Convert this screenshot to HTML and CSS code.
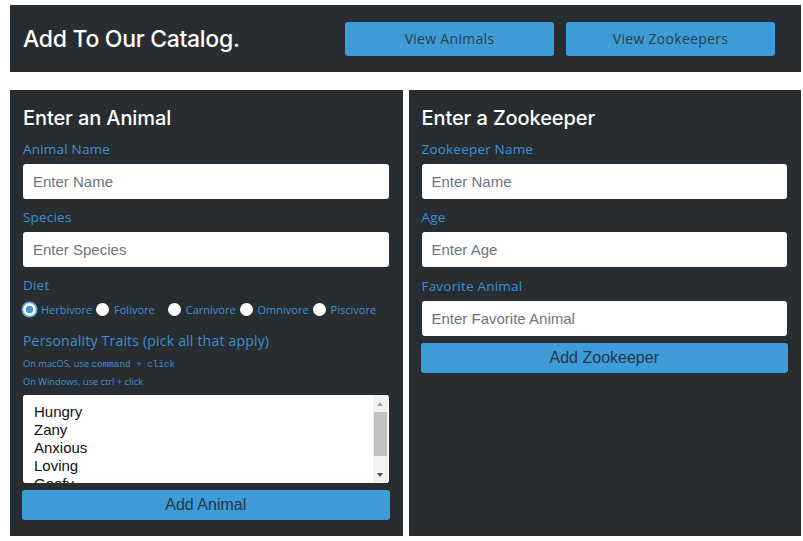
FILE: index.html
```html
<!DOCTYPE html>
<html lang="en">
<head>
<meta charset="utf-8">
<title>Zoo Catalog</title>
<link rel="stylesheet" href="styles.css">
</head>
<body>
<div class="page">
  <header class="topbar">
    <h1 class="title">Add To Our Catalog.</h1>
    <nav class="nav">
      <a class="nav-btn" href="#">View Animals</a>
      <a class="nav-btn" href="#">View Zookeepers</a>
    </nav>
  </header>

  <main class="panels">
    <form class="panel">
      <h2 class="panel-title">Enter an Animal</h2>
      <div class="field">
        <label class="label" for="name">Animal Name</label>
        <input class="input" id="name" type="text" placeholder="Enter Name">
      </div>
      <div class="field">
        <label class="label" for="species">Species</label>
        <input class="input" id="species" type="text" placeholder="Enter Species">
      </div>
      <div class="field field-diet">
        <div class="label">Diet</div>
        <div class="radios">
          <input class="radio" type="radio" name="diet" id="herbivore" checked><label class="radio-label" for="herbivore">Herbivore</label>
          <input class="radio" type="radio" name="diet" id="folivore"><label class="radio-label radio-label-wide" for="folivore">Folivore</label>
          <input class="radio" type="radio" name="diet" id="carnivore"><label class="radio-label" for="carnivore">Carnivore</label>
          <input class="radio" type="radio" name="diet" id="omnivore"><label class="radio-label" for="omnivore">Omnivore</label>
          <input class="radio" type="radio" name="diet" id="piscivore"><label class="radio-label" for="piscivore">Piscivore</label>
        </div>
      </div>
      <label class="label label-traits" for="traits">Personality Traits (pick all that apply)</label>
      <p class="hint">On macOS, use <span class="mono">command + click</span></p>
      <p class="hint">On Windows, use ctrl + click</p>
      <div class="listbox">
        <select class="traits" id="traits" multiple>
          <option>Hungry</option>
          <option>Zany</option>
          <option>Anxious</option>
          <option>Loving</option>
          <option>Goofy</option>
          <option>Sleepy</option>
        </select>
        <div class="scrollbar" aria-hidden="true">
          <span class="sb-btn"><span class="arrow-up"></span></span>
          <span class="sb-track"><span class="sb-thumb"></span></span>
          <span class="sb-btn"><span class="arrow-down"></span></span>
        </div>
      </div>
      <button class="submit" type="button">Add Animal</button>
    </form>

    <form class="panel">
      <h2 class="panel-title">Enter a Zookeeper</h2>
      <div class="field">
        <label class="label" for="zname">Zookeeper Name</label>
        <input class="input" id="zname" type="text" placeholder="Enter Name">
      </div>
      <div class="field">
        <label class="label" for="age">Age</label>
        <input class="input" id="age" type="text" placeholder="Enter Age">
      </div>
      <div class="field field-last">
        <label class="label" for="fav">Favorite Animal</label>
        <input class="input" id="fav" type="text" placeholder="Enter Favorite Animal">
      </div>
      <button class="submit" type="button">Add Zookeeper</button>
    </form>
  </main>
</div>
</body>
</html>
```

FILE: styles.css
```css
* { box-sizing: border-box; }

html, body {
  margin: 0;
  padding: 0;
  background: #ffffff;
}

.page {
  padding: 5px 2px 0 10px;
}

.topbar {
  display: flex;
  align-items: center;
  height: 67px;
  padding: 0 26px 0 13px;
  background: #282d31;
}

.title {
  flex: 1;
  margin: 0;
  font-family: Inter, "Open Sans", sans-serif;
  font-weight: 500;
  font-size: 23px;
  color: #ffffff;
  letter-spacing: -0.3px;
}

.nav {
  display: flex;
  gap: 12px;
}

.nav-btn {
  display: flex;
  align-items: center;
  justify-content: center;
  width: 209px;
  height: 34px;
  border-radius: 3px;
  background: #3d9bd8;
  color: #2c3f4e;
  font-family: "Open Sans", sans-serif;
  font-size: 14px;
  text-decoration: none;
  letter-spacing: 0.3px;
}

.panels {
  display: flex;
  gap: 6px;
  margin-top: 18px;
}

.panel {
  flex: 1;
  display: flex;
  flex-direction: column;
  height: 446px;
  margin: 0;
  padding: 16px 14px 0 13px;
  background: #282d31;
}

.panel-title {
  margin: 0 0 10px;
  font-family: Inter, "Open Sans", sans-serif;
  font-weight: 500;
  font-size: 20px;
  line-height: 24px;
  color: #ffffff;
  letter-spacing: -0.1px;
}

.field {
  display: flex;
  flex-direction: column;
  margin-bottom: 9px;
}

.label {
  display: block;
  margin-bottom: 6px;
  font-family: "Open Sans", sans-serif;
  font-weight: 500;
  font-size: 13.5px;
  line-height: 18px;
  color: #3f8ed0;
  letter-spacing: 0.2px;
}

.input {
  height: 35px;
  padding: 0 10px;
  border: none;
  border-radius: 3px;
  background: #ffffff;
  font-family: "Liberation Sans", Arial, sans-serif;
  font-size: 15px;
  color: #333;
}

.input::placeholder {
  color: #6c757d;
}

.field-diet {
  margin-bottom: 15px;
}

.field-diet .label {
  margin-bottom: 8px;
}

.radios {
  display: flex;
  align-items: center;
  height: 15px;
}

.radio {
  appearance: none;
  -webkit-appearance: none;
  flex: none;
  width: 13px;
  height: 13px;
  margin: 0;
  border-radius: 50%;
  background: #ffffff;
}

.radio:checked {
  background: radial-gradient(circle, #3d9bd8 0 3.5px, #ffffff 4px);
  box-shadow: 0 0 0 1.5px #5aaee4;
}

.radio-label {
  margin: 0 4px 0 5px;
  font-family: "Open Sans", sans-serif;
  font-weight: 500;
  font-size: 11px;
  color: #3f8ed0;
}

.radio-label-wide {
  margin-right: 13px;
}

.label-traits {
  margin-bottom: 5px;
  font-size: 14px;
}

.hint {
  margin: 0;
  font-family: "Open Sans", sans-serif;
  font-weight: 500;
  font-size: 9.3px;
  line-height: 17px;
  color: #3f8ed0;
}

.mono {
  font-family: "Liberation Mono", monospace;
  font-size: 9.3px;
}

.listbox {
  display: flex;
  height: 88px;
  margin-top: 5px;
  padding-right: 1px;
  border-radius: 3px;
  background: #ffffff;
  overflow: hidden;
}

.traits {
  flex: 1;
  min-width: 0;
  height: 100%;
  padding: 8px 0 0 0;
  border: none;
  background: #ffffff;
  font-family: "Liberation Sans", Arial, sans-serif;
  font-size: 15px;
  color: #111;
  outline: none;
  overflow: hidden;
}

.traits option {
  padding: 0 11px;
}

.scrollbar {
  display: flex;
  flex-direction: column;
  width: 15px;
  background: #f1f1f1;
}

.sb-btn {
  display: flex;
  align-items: center;
  justify-content: center;
  height: 17px;
}

.arrow-up {
  width: 0;
  height: 0;
  border-left: 3.5px solid transparent;
  border-right: 3.5px solid transparent;
  border-bottom: 4px solid #a3a3a3;
}

.arrow-down {
  width: 0;
  height: 0;
  border-left: 3.5px solid transparent;
  border-right: 3.5px solid transparent;
  border-top: 4px solid #505050;
}

.sb-track {
  flex: 1;
  padding: 0 1px;
}

.sb-thumb {
  display: block;
  height: 44px;
  background: #c1c1c1;
}

.submit {
  height: 30px;
  margin: 7px -1px 0;
  border: none;
  border-radius: 3px;
  background: #3d9bd8;
  font-family: "Liberation Sans", Arial, sans-serif;
  font-size: 16px;
  color: #263746;
}

.field-last {
  margin-top: 1px;
  margin-bottom: 0;
}
```
